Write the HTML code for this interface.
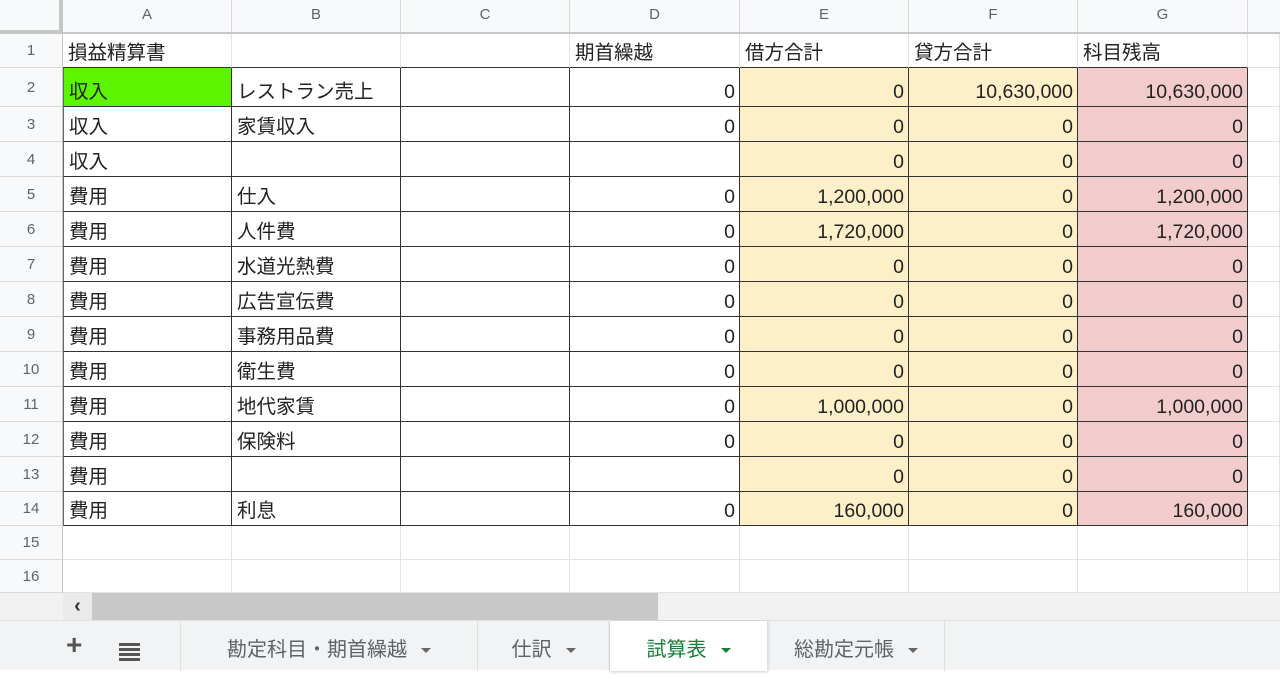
<!DOCTYPE html>
<html><head><meta charset="utf-8"><style>
*{margin:0;padding:0;box-sizing:border-box}
body{width:1280px;height:670px;overflow:hidden;background:#fff;font-family:"Liberation Sans","Noto Sans CJK JP",sans-serif;position:relative}
.colh{position:absolute;top:0;left:0;width:1280px;height:34px;background:#f8f9fa;border-bottom:2px solid #c4c7c5}
.colh div{position:absolute;top:0;height:32px;line-height:30px;text-align:center;font-size:15px;color:#5f6368;border-right:1px solid #d9d9d9}
.corner{position:absolute;left:0;top:0;width:63px;height:34px;background:#f8f9fa;border-right:4px solid #c4c7c5;border-bottom:4px solid #c4c7c5}
.rowh{position:absolute;left:0;width:63px;background:#f8f9fa;border-right:1px solid #c4c7c5;border-bottom:1px solid #d9d9d9;font-size:15px;color:#5f6368;text-align:center}
table{position:absolute;left:63px;top:34px;width:1217px;border-collapse:separate;border-spacing:0;table-layout:fixed}
td{border-right:1px solid #e2e2e2;border-bottom:1px solid #e2e2e2;font-size:19.5px;color:#222;padding:0 4px 1px 5px;vertical-align:bottom;white-space:nowrap;overflow:hidden;line-height:25px}
tr.d td{border-right:1.5px solid #333;border-bottom:1.5px solid #333}
tr.r1 td{border-bottom:1.5px solid #333}
tr.r1 td:nth-child(8){border-bottom:1px solid #e2e2e2}
tr.d td:nth-child(8){border-right:1px solid #e2e2e2;border-bottom:1px solid #e2e2e2}
tr.d td:first-child{border-left:1px solid #666}
td.n{text-align:right}
td.y{background:#fdf0c9}
td.p{background:#f2cccc}
td.g{background:#5cf500}
.sb{position:absolute;left:0;top:593px;width:1280px;height:27px;background:#f1f1f1}
.thumb{position:absolute;left:92px;top:593px;width:566px;height:27px;background:#c8c8c8}
.tabs{position:absolute;left:0;top:620px;width:1280px;height:50px;background:#f1f3f4;border-top:1px solid #e0e0e0}
.tab{position:absolute;top:0;height:50px;line-height:58px;font-size:20px;color:#5f6368;border-right:1px solid #e0e0e0;text-align:center}
.tab.a{background:#fff;color:#188038;box-shadow:0 1px 3px rgba(0,0,0,.2)}
.tri{display:inline-block;width:0;height:0;border-left:5px solid transparent;border-right:5px solid transparent;border-top:5px solid #666;vertical-align:middle;margin-left:14px}
.a .tri{border-top-color:#188038}
</style></head><body>
<div class="colh">
<div style="left:63px;width:169px">A</div><div style="left:232px;width:169px">B</div><div style="left:401px;width:169px">C</div><div style="left:570px;width:170px">D</div><div style="left:740px;width:169px">E</div><div style="left:909px;width:169px">F</div><div style="left:1078px;width:170px">G</div><div style="left:1248px;width:40px"></div>
</div>
<div class="corner"></div>
<div class="rowh" style="top:34px;height:34px;line-height:34px">1</div>
<div class="rowh" style="top:68px;height:39px;line-height:39px">2</div>
<div class="rowh" style="top:107px;height:35px;line-height:35px">3</div>
<div class="rowh" style="top:142px;height:35px;line-height:35px">4</div>
<div class="rowh" style="top:177px;height:35px;line-height:35px">5</div>
<div class="rowh" style="top:212px;height:35px;line-height:35px">6</div>
<div class="rowh" style="top:247px;height:35px;line-height:35px">7</div>
<div class="rowh" style="top:282px;height:35px;line-height:35px">8</div>
<div class="rowh" style="top:317px;height:35px;line-height:35px">9</div>
<div class="rowh" style="top:352px;height:35px;line-height:35px">10</div>
<div class="rowh" style="top:387px;height:35px;line-height:35px">11</div>
<div class="rowh" style="top:422px;height:35px;line-height:35px">12</div>
<div class="rowh" style="top:457px;height:35px;line-height:35px">13</div>
<div class="rowh" style="top:492px;height:34px;line-height:34px">14</div>
<div class="rowh" style="top:526px;height:34px;line-height:34px">15</div>
<div class="rowh" style="top:560px;height:33px;line-height:33px">16</div>
<table>
<colgroup><col style="width:169px"><col style="width:169px"><col style="width:169px"><col style="width:170px"><col style="width:169px"><col style="width:169px"><col style="width:170px"><col style="width:32px"></colgroup>
<tr class="r1" style="height:34px"><td>損益精算書</td><td></td><td></td><td>期首繰越</td><td>借方合計</td><td>貸方合計</td><td>科目残高</td><td></td></tr>
<tr class="d" style="height:39px"><td class="g">収入</td><td>レストラン売上</td><td></td><td class="n">0</td><td class="n y">0</td><td class="n y">10,630,000</td><td class="n p">10,630,000</td><td></td></tr>
<tr class="d" style="height:35px"><td>収入</td><td>家賃収入</td><td></td><td class="n">0</td><td class="n y">0</td><td class="n y">0</td><td class="n p">0</td><td></td></tr>
<tr class="d" style="height:35px"><td>収入</td><td></td><td></td><td class="n"></td><td class="n y">0</td><td class="n y">0</td><td class="n p">0</td><td></td></tr>
<tr class="d" style="height:35px"><td>費用</td><td>仕入</td><td></td><td class="n">0</td><td class="n y">1,200,000</td><td class="n y">0</td><td class="n p">1,200,000</td><td></td></tr>
<tr class="d" style="height:35px"><td>費用</td><td>人件費</td><td></td><td class="n">0</td><td class="n y">1,720,000</td><td class="n y">0</td><td class="n p">1,720,000</td><td></td></tr>
<tr class="d" style="height:35px"><td>費用</td><td>水道光熱費</td><td></td><td class="n">0</td><td class="n y">0</td><td class="n y">0</td><td class="n p">0</td><td></td></tr>
<tr class="d" style="height:35px"><td>費用</td><td>広告宣伝費</td><td></td><td class="n">0</td><td class="n y">0</td><td class="n y">0</td><td class="n p">0</td><td></td></tr>
<tr class="d" style="height:35px"><td>費用</td><td>事務用品費</td><td></td><td class="n">0</td><td class="n y">0</td><td class="n y">0</td><td class="n p">0</td><td></td></tr>
<tr class="d" style="height:35px"><td>費用</td><td>衛生費</td><td></td><td class="n">0</td><td class="n y">0</td><td class="n y">0</td><td class="n p">0</td><td></td></tr>
<tr class="d" style="height:35px"><td>費用</td><td>地代家賃</td><td></td><td class="n">0</td><td class="n y">1,000,000</td><td class="n y">0</td><td class="n p">1,000,000</td><td></td></tr>
<tr class="d" style="height:35px"><td>費用</td><td>保険料</td><td></td><td class="n">0</td><td class="n y">0</td><td class="n y">0</td><td class="n p">0</td><td></td></tr>
<tr class="d" style="height:35px"><td>費用</td><td></td><td></td><td class="n"></td><td class="n y">0</td><td class="n y">0</td><td class="n p">0</td><td></td></tr>
<tr class="d" style="height:34px"><td>費用</td><td>利息</td><td></td><td class="n">0</td><td class="n y">160,000</td><td class="n y">0</td><td class="n p">160,000</td><td></td></tr>
<tr style="height:34px"><td></td><td></td><td></td><td></td><td></td><td></td><td></td><td></td></tr>
<tr style="height:33px"><td></td><td></td><td></td><td></td><td></td><td></td><td></td><td></td></tr>
</table>
<div class="sb"></div>
<div style="position:absolute;left:63px;top:593px;width:29px;height:27px;background:#eaeaea;font-size:20px;line-height:26px;text-align:center;color:#333;font-weight:bold">‹</div>
<div class="thumb"></div>
<div class="tabs">
<div style="position:absolute;left:66px;top:8px;font-size:28px;color:#555;font-weight:bold">+</div>
<div style="position:absolute;left:119px;top:22px;width:21px;height:18px;background:repeating-linear-gradient(#555 0 3px,transparent 3px 5px)"></div>
<div class="tab" style="left:180px;width:298px;border-left:1px solid #e0e0e0">勘定科目・期首繰越<span class="tri"></span></div>
<div class="tab" style="left:478px;width:132px">仕訳<span class="tri"></span></div>
<div class="tab a" style="left:610px;width:158px">試算表<span class="tri"></span></div>
<div class="tab" style="left:768px;width:177px">総勘定元帳<span class="tri"></span></div>
</div>
</body></html>
